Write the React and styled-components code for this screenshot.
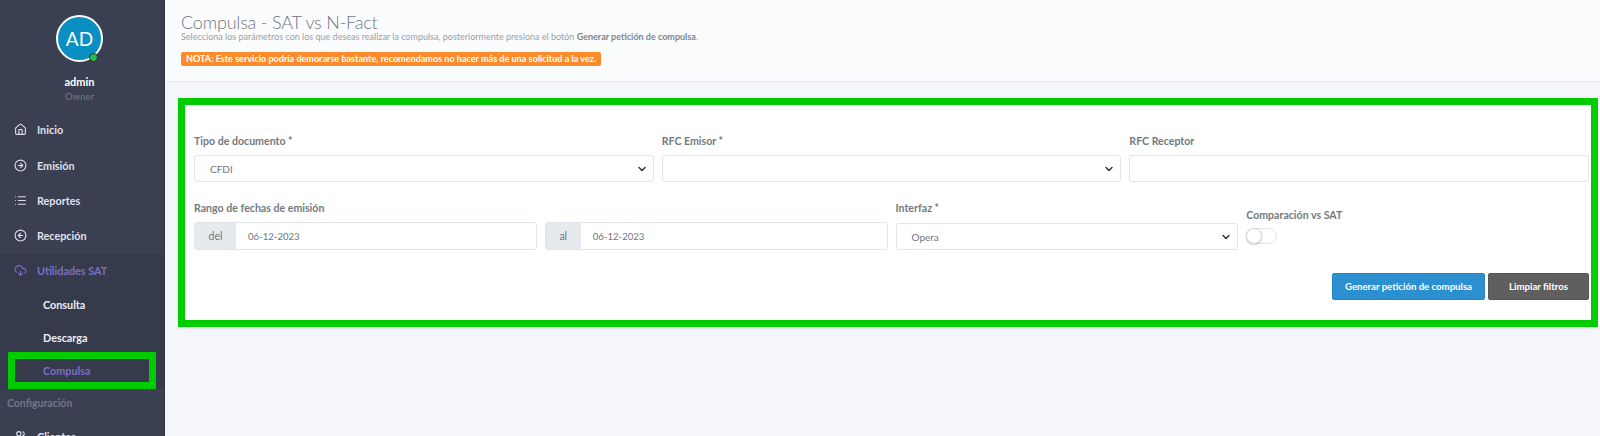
import React from 'react';
import styled, { createGlobalStyle } from 'styled-components';
import { Home, CircleArrowRight, CircleArrowLeft, List, CloudDownload, Users, ChevronDown } from 'lucide-react';

const GlobalStyle = createGlobalStyle`
  html, body {
    margin: 0;
    height: 100%;
    overflow: hidden;
  }
  body {
    font-family: Lato, "Open Sans", sans-serif;
    background: #f4f6fb;
  }
`;

const Layout = styled.div`
  display: flex;
  height: 436px;
  overflow: hidden;
`;

const Sidebar = styled.aside`
  width: 164px;
  flex-shrink: 0;
  background: #3a3f51;
  border-right: 1px solid #2f3342;
  color: #e4e6ee;
  overflow: hidden;
  box-sizing: content-box;
`;

const Profile = styled.div`
  display: flex;
  flex-direction: column;
  align-items: center;
  padding: 15px 5px 0 0;
`;

const Avatar = styled.div`
  position: relative;
  width: 43px;
  height: 43px;
  border-radius: 50%;
  border: 2px solid #fff;
  background: #0b8ec2;
  color: #fff;
  font-size: 19px;
  display: flex;
  align-items: center;
  justify-content: center;
`;

const Status = styled.span`
  position: absolute;
  right: 3px;
  bottom: -2px;
  width: 7px;
  height: 7px;
  border-radius: 50%;
  background: #27c24c;
  border: 1px solid #20263a;
`;

const UserName = styled.div`
  margin-top: 13px;
  font-size: 11px;
  font-weight: 700;
  color: #fff;
  line-height: 14px;
`;

const UserRole = styled.div`
  margin-top: 1px;
  font-size: 9.5px;
  color: #727789;
  line-height: 14px;
`;

const Nav = styled.nav`
  margin-top: 8px;
  display: flex;
  flex-direction: column;
`;

const NavItem = styled.div`
  height: ${(p) => (p.$active ? '34px' : '35.4px')};
  flex-shrink: 0;
  display: flex;
  align-items: center;
  gap: 10px;
  padding-left: 14px;
  font-size: 10.8px;
  font-weight: 700;
  color: ${(p) => (p.$active ? '#7a6fc4' : '#dfe1ea')};
  svg {
    width: 13px;
    height: 13px;
    color: ${(p) => (p.$active ? '#7a6fc4' : '#dfe1ea')};
  }
`;

const SubNav = styled.div`
  background: #363b4c;
  display: flex;
  flex-direction: column;
`;

const SubItem = styled.div`
  height: 33.3px;
  display: flex;
  align-items: center;
  padding-left: 43px;
  font-size: 10.8px;
  font-weight: 700;
  color: #eceef4;
`;

const SubItemActive = styled(SubItem)`
  box-sizing: border-box;
  height: 37px;
  margin: -2.5px 8px 0;
  padding-left: 28px;
  border: 7px solid #00cc00;
  color: #7a6fc4;
`;

const NavHeading = styled.div`
  height: 28px;
  margin-bottom: 2px;
  flex-shrink: 0;
  display: flex;
  align-items: center;
  padding-left: 7px;
  font-size: 10.5px;
  font-weight: 700;
  color: #727789;
`;

const Main = styled.main`
  flex: 1;
  min-width: 0;
`;

const PageHeader = styled.header`
  height: 82px;
  box-sizing: border-box;
  background: #fbfcfd;
  border-bottom: 1px solid #e3e8ee;
  padding: 12px 16px 0;
`;

const Title = styled.h1`
  margin: 0;
  font-size: 18px;
  font-weight: 300;
  letter-spacing: -0.2px;
  line-height: 20px;
  color: #6f7680;
`;

const Subtitle = styled.p`
  margin: 0;
  font-size: 9px;
  line-height: 10px;
  color: #98a0a8;
  b {
    font-weight: 700;
    color: #7d858d;
  }
`;

const Note = styled.div`
  display: table;
  margin-top: 10px;
  padding: 0 5px;
  height: 14px;
  line-height: 14px;
  border-radius: 2px;
  background: #fd8b2c;
  color: #fff;
  font-size: 9.05px;
  font-weight: 700;
`;

const Content = styled.div`
  padding: 16px 2px 0 13px;
`;

const Card = styled.section`
  box-sizing: border-box;
  height: 229px;
  background: #fff;
  border: 7px solid #00cc00;
  padding: 29px 2px 0 9px;
  box-shadow: 0 2px 1px #e3e7ee;
  display: flex;
  flex-direction: column;
`;

const Row = styled.div`
  display: grid;
  grid-template-columns: repeat(${(p) => p.$cols}, 1fr);
  gap: 8px;
  margin-bottom: 19px;
`;

const Field = styled.div`
  display: flex;
  flex-direction: column;
  min-width: 0;
`;

const Label = styled.label`
  font-size: 10.6px;
  font-weight: 700;
  line-height: 14px;
  height: 21px;
  color: #737a81;
`;

const Box = styled.div`
  box-sizing: border-box;
  height: 27px;
  margin-top: ${(p) => (p.$low ? '1px' : '0')};
  display: flex;
  align-items: center;
  justify-content: space-between;
  padding: 0 5px 0 15px;
  background: #fff;
  border: 1px solid #dfe5ea;
  border-radius: 3px;
  font-size: 10px;
  color: #6f7680;
  svg {
    width: 12px;
    height: 12px;
    stroke-width: 3;
    color: #2f3542;
  }
`;

const DateGroup = styled.div`
  display: flex;
  height: 28px;
  box-sizing: border-box;
  border: 1px solid #dfe5ea;
  border-radius: 3px;
  font-size: 10.5px;
  color: #6f7680;
`;

const Addon = styled.span`
  width: ${(p) => p.$w}px;
  background: #e6eaee;
  display: flex;
  align-items: center;
  justify-content: center;
`;

const DateValue = styled.span`
  flex: 1;
  display: flex;
  align-items: center;
  padding-left: 12px;
  font-size: 9.6px;
`;

const SwitchField = styled(Field)`
  padding-top: 7px;
  ${Label} {
    height: 20px;
  }
`;

const Toggle = styled.div`
  position: relative;
  width: 31px;
  height: 16px;
  box-sizing: border-box;
  border: 1px solid #dfe2e6;
  border-radius: 8px;
  background: #fff;
`;

const Knob = styled.span`
  position: absolute;
  left: -1px;
  top: -1px;
  width: 16px;
  height: 16px;
  box-sizing: border-box;
  border-radius: 50%;
  background: #fff;
  border: 1px solid #d5d8dc;
  box-shadow: 0 1px 2px rgba(0, 0, 0, 0.2);
`;

const Actions = styled.div`
  display: flex;
  justify-content: flex-end;
  gap: 3px;
  margin-top: 4px;
`;

const Button = styled.button`
  height: 27px;
  width: ${(p) => p.$w}px;
  border-radius: 2px;
  border: 1px solid ${(p) => p.$border};
  background: ${(p) => p.$bg};
  color: #fff;
  font-family: inherit;
  font-size: 9.6px;
  font-weight: 700;
  padding: 0;
`;

export default function App() {
  return (
    <Layout>
      <GlobalStyle />
      <Sidebar>
        <Profile>
          <Avatar>
            AD
            <Status />
          </Avatar>
          <UserName>admin</UserName>
          <UserRole>Owner</UserRole>
        </Profile>
        <Nav>
          <NavItem><Home />Inicio</NavItem>
          <NavItem><CircleArrowRight />Emisión</NavItem>
          <NavItem><List />Reportes</NavItem>
          <NavItem><CircleArrowLeft />Recepción</NavItem>
          <SubNav>
            <NavItem $active><CloudDownload />Utilidades SAT</NavItem>
            <SubItem>Consulta</SubItem>
            <SubItem>Descarga</SubItem>
            <SubItemActive>Compulsa</SubItemActive>
          </SubNav>
          <NavHeading>Configuración</NavHeading>
          <NavItem><Users />Clientes</NavItem>
        </Nav>
      </Sidebar>
      <Main>
        <PageHeader>
          <Title>Compulsa - SAT vs N-Fact</Title>
          <Subtitle>
            Selecciona los parámetros con los que deseas realizar la compulsa, posteriormente presiona el botón{' '}
            <b>Generar petición de compulsa</b>.
          </Subtitle>
          <Note>NOTA: Este servicio podría demorarse bastante, recomendamos no hacer más de una solicitud a la vez.</Note>
        </PageHeader>
        <Content>
          <Card>
            <Row $cols={3}>
              <Field>
                <Label>Tipo de documento *</Label>
                <Box>CFDI<ChevronDown /></Box>
              </Field>
              <Field>
                <Label>RFC Emisor *</Label>
                <Box><span /><ChevronDown /></Box>
              </Field>
              <Field>
                <Label>RFC Receptor</Label>
                <Box />
              </Field>
            </Row>
            <Row $cols={4}>
              <Field>
                <Label>Rango de fechas de emisión</Label>
                <DateGroup>
                  <Addon $w={41}>del</Addon>
                  <DateValue>06-12-2023</DateValue>
                </DateGroup>
              </Field>
              <Field>
                <Label>&nbsp;</Label>
                <DateGroup>
                  <Addon $w={35}>al</Addon>
                  <DateValue>06-12-2023</DateValue>
                </DateGroup>
              </Field>
              <Field>
                <Label>Interfaz *</Label>
                <Box $low>Opera<ChevronDown /></Box>
              </Field>
              <SwitchField>
                <Label>Comparación vs SAT</Label>
                <Toggle><Knob /></Toggle>
              </SwitchField>
            </Row>
            <Actions>
              <Button $w={153} $bg="#2b8fd0" $border="#2a84bf">Generar petición de compulsa</Button>
              <Button $w={101} $bg="#5f5f5f" $border="#555">Limpiar filtros</Button>
            </Actions>
          </Card>
        </Content>
      </Main>
    </Layout>
  );
}
